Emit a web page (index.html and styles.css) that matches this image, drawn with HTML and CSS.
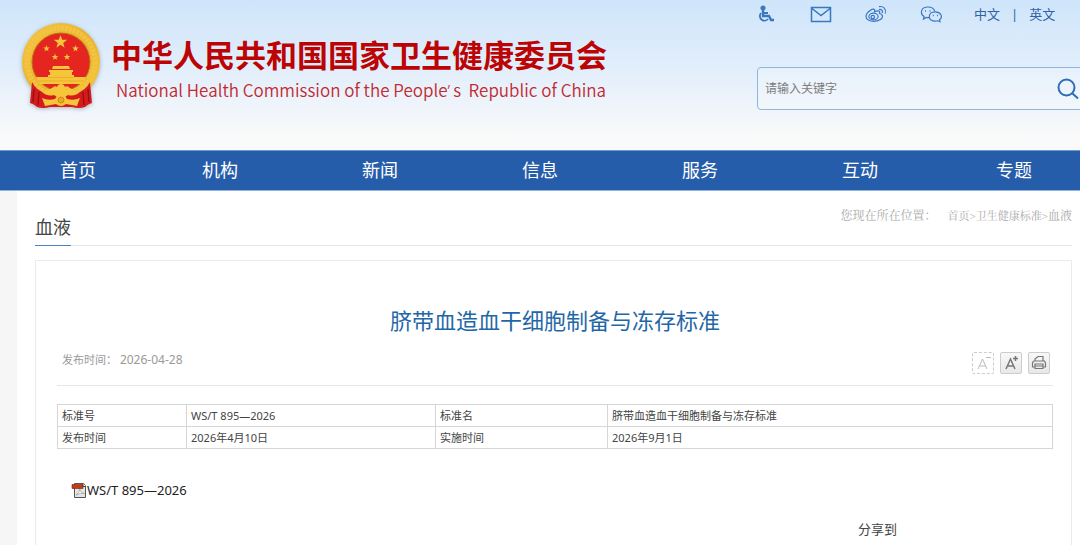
FILE: index.html
```html
<!DOCTYPE html>
<html lang="zh-CN">
<head>
    <meta charset="UTF-8">
    <meta name="viewport" content="width=device-width, initial-scale=1.0">
    <title>脐带血造血干细胞制备与冻存标准</title>
    <link rel="stylesheet" href="styles.css">
</head>
<body>
    <header class="header">
        <a class="brand" href="#">
            <svg class="emblem" viewBox="0 0 80 86" aria-hidden="true">
                <defs>
                    <linearGradient id="gold" x1="0" y1="0" x2="1" y2="1">
                        <stop offset="0" stop-color="#f5c742"/>
                        <stop offset="0.5" stop-color="#eab32c"/>
                        <stop offset="1" stop-color="#f6c63a"/>
                    </linearGradient>
                    <path id="star" d="M0-7 1.7-2.2 6.7-2.2 2.7.9 4.1 5.7 0 2.8-4.1 5.7-2.7.9-6.7-2.2-1.7-2.2z"/>
                </defs>
                <circle cx="40" cy="39" r="39" fill="url(#gold)"/>
                <circle cx="40" cy="39" r="34" fill="none" stroke="#f3c444" stroke-width="5" stroke-dasharray="3 1"/>
                <circle cx="40" cy="39" r="29" fill="#e5251f" stroke="#b97518"/>
                <path d="M11 59 9 80q4 1 7 4 6 2 13 0h22q7 2 13 0 3-3 7-4L69 59q-4 8-13 11H24Q15 67 11 59z" fill="#d51b1c"/>
                <path d="M13 66 12 79M18 69 17 82M67 66l1 13M62 69l1 13" stroke="#9c1013" stroke-width="1.500"/>
                <g fill="#f6c53a">
                    <use href="#star" transform="translate(39.500 19)"/>
                    <use href="#star" transform="translate(25.500 25.500) scale(.5)"/>
                    <use href="#star" transform="translate(54.500 25.500) scale(.5)"/>
                    <use href="#star" transform="translate(34 34) scale(.5)"/>
                    <use href="#star" transform="translate(46 34) scale(.5)"/>
                    <path d="M32 43h16l1 3H31zM28 47h24v2H28zM29 49h22v3H29zM27 52h26v3H27zM15 54h50q-1 4-4 7H19q-3-3-4-7z"/>
                    <path d="M20 68q6 1 11-3 3-3 5-1 1-3 4-3t4 3q2-2 5 1 5 4 11 3-6 6-13 4-3 3-7 3t-7-3q-7 2-13-4z"/>
                    <path d="M21 75q6 3 13 1 2-4 6-4t6 4q7 2 13-1-2 5-3 8l-11-2q-5 4-10 0l-11 2q-1-3-3-8z"/>
                </g>
                <path d="M27 54.500h26M17 58h46" stroke="#e9a52a" stroke-width=".7"/>
                <circle cx="40" cy="77" r="3" fill="#e8a924" stroke="#d8841e"/>
            </svg>
            <span class="brand-text">
                <strong class="brand-cn">中华人民共和国国家卫生健康委员会</strong>
                <span class="brand-en">National Health Commission of the People<span class="quote">’</span>s&nbsp; Republic of China</span>
            </span>
        </a>
        <div class="header-side">
            <div class="tools">
                <a class="tool" href="#" aria-label="无障碍">
                    <svg viewBox="0 0 24 18"><circle cx="9" cy="3" r="2" fill="currentColor"/><path d="M9 5v6h6l2 4h3" stroke-width="2.400"/><path d="M9 8h5M7 8a4.500 4.500 0 1 0 7 6" stroke-width="1.800"/></svg>
                </a>
                <a class="tool" href="#" aria-label="邮箱">
                    <svg viewBox="0 0 24 18"><path d="M2.500 2.500h19v14h-19zM3 3.500l9 7 9-7" stroke-width="1.500"/></svg>
                </a>
                <a class="tool" href="#" aria-label="微博">
                    <svg viewBox="0 0 24 18"><path d="M15.500 8.500c1-3-1.500-3.300-5-1.800 1-3-1.500-3.200-4-1.500-3 2-4.500 4-4.500 6.200 0 3 3.500 5 8 5s8.500-2.500 8.500-5c0-1.500-1-2.500-3-2.900z"/><ellipse cx="9.500" cy="11.500" rx="4.600" ry="3.300"/><circle cx="8.800" cy="12" r="1.700"/><path d="M15 4.500c2.500-.5 4 1.200 3.300 3.500M15 1.700c4.500-1 7.500 2.500 6.300 6.800"/></svg>
                </a>
                <a class="tool" href="#" aria-label="微信">
                    <svg viewBox="0 0 24 18"><path d="M11 12.500c-1 .2-2.500.2-3.600-.1L4.500 14l.6-2.500C.5 8.500 2 2 8.800 2c4 0 6.500 2.200 6.900 4.500"/><path d="M16.300 6.800c-8 0-8 9.400 0 9.400 1 0 1.700-.1 2.500-.4l2.200 1-.5-2c4-3 1-8-4.200-8z"/><path d="M6 6h1M10.500 6h1M13.800 10.500h1M18 10.500h1" stroke-width="1.500"/></svg>
                </a>
                <div class="languages">
                    <a href="#">中文</a>
                    <span>|</span>
                    <a href="#">英文</a>
                </div>
            </div>
            <form class="search">
                <input class="search-input" type="text" placeholder="请输入关键字" aria-label="请输入关键字">
                <button class="search-button" type="button" aria-label="搜索">
                    <svg viewBox="0 0 22 22"><circle cx="9.500" cy="9.500" r="8"/><path d="M15.500 15.500 21 20.500"/></svg>
                </button>
            </form>
        </div>
    </header>

    <nav class="nav">
        <a href="#">首页</a>
        <a href="#">机构</a>
        <a href="#">新闻</a>
        <a href="#">信息</a>
        <a href="#">服务</a>
        <a href="#">互动</a>
        <a href="#">专题</a>
    </nav>

    <main class="content">
        <div class="section-bar">
            <h2>血液</h2>
            <div class="crumbs">
                <span class="crumbs-label">您现在所在位置：</span>
                <span class="crumbs-path"><a href="#">首页</a>&gt;<a href="#">卫生健康标准</a>&gt;</span><a href="#">血液</a>
            </div>
        </div>

        <article class="article">
            <h1>脐带血造血干细胞制备与冻存标准</h1>
            <div class="meta">
                <span class="date">发布时间： <time>2026-04-28</time></span>
                <div class="actions">
                    <button class="action action-off" type="button" aria-label="缩小字体">
                        <svg viewBox="0 0 20 20"><path d="M5 16 9.500 6 14 16M6.500 13h6M13 4.500h5"/></svg>
                    </button>
                    <button class="action" type="button" aria-label="放大字体">
                        <svg viewBox="0 0 20 20"><path d="M5 16 9.500 6 14 16M6.500 13h6" stroke-width="1.500"/><path d="M12 5.500h5M14.500 3v5" stroke-width="1.500"/></svg>
                    </button>
                    <button class="action" type="button" aria-label="打印">
                        <svg viewBox="0 0 20 20"><path d="M6 8V6l3-2.500h5V8M4.500 8h11l1 2v4h-2M5.500 14h-2v-4l1-2M6 11h8v4.500H6zM6 13h8" stroke-width="1.200"/></svg>
                    </button>
                </div>
            </div>

            <table class="info">
                <tr>
                    <td class="col-name">标准号</td>
                    <td class="col-value">WS/T 895—2026</td>
                    <td class="col-label">标准名</td>
                    <td>脐带血造血干细胞制备与冻存标准</td>
                </tr>
                <tr>
                    <td>发布时间</td>
                    <td>2026年4月10日</td>
                    <td>实施时间</td>
                    <td>2026年9月1日</td>
                </tr>
            </table>

            <a class="attachment" href="#">
                <svg viewBox="0 0 16 16" aria-hidden="true">
                    <path d="M3.500 1.500h9l2 2v12h-11z" fill="#e4e4e2" stroke="#555"/>
                    <path d="M5 13c3-2 4-5 3.500-7 1 4 2 5 5 5.500-3-.5-5 0-8.500 1.500z" fill="#fff" stroke="#999" stroke-width=".7"/>
                    <path d="M1 2.500h11v4H1z" fill="#c63a12" stroke="#6f2413" stroke-width=".6"/>
                    <path d="M12 1.500v3h3" fill="#fff" stroke="#444"/>
                </svg>
                <span>WS/T 895—2026</span>
            </a>

            <div class="share">分享到</div>
        </article>
    </main>
</body>
</html>
```

FILE: styles.css
```css
* {
    box-sizing: border-box;
}

body {
    margin: 0;
    overflow: hidden;
    background-color: #f6f6f6;
    color: #444;
    font-family: "Noto Sans", "Noto Sans CJK SC", sans-serif;
    font-size: 12px;
}

a {
    color: inherit;
    text-decoration: none;
}

button {
    padding: 0;
    cursor: pointer;
}

svg {
    display: block;
}

.header {
    display: flex;
    justify-content: space-between;
    height: 150px;
    padding-left: 21px;
    background: linear-gradient(#cfe5fb, #e4effb 50%, #fafafa 93%);
}

.brand {
    display: flex;
    gap: 10px;
    padding-top: 23px;
    white-space: nowrap;
}

.emblem {
    width: 80px;
    height: 86px;
    filter: drop-shadow(0 1px 2px rgba(90, 120, 150, 0.5));
}

.brand-text {
    display: flex;
    flex-direction: column;
    padding-top: 11px;
    color: #bd0404;
    font-family: "Noto Sans CJK SC", sans-serif;
}

.brand-cn {
    font-size: 31px;
    line-height: 40px;
}

.brand-en {
    padding-left: 5px;
    color: #c22a30;
    font-size: 17px;
    font-weight: 350;
    line-height: 31px;
}

.quote {
    margin-right: 3px;
    font-family: "Noto Sans", sans-serif;
}

.header-side {
    width: 323px;
    color: #3a78be;
}

.tools {
    display: flex;
    align-items: center;
    gap: 31px;
    height: 28px;
    margin-left: -3px;
}

.tool svg {
    width: 24px;
    height: 18px;
    fill: none;
    stroke: currentColor;
    stroke-width: 1.2px;
}

.languages {
    display: flex;
    gap: 11px;
    color: #2f62a8;
    font-size: 13px;
    line-height: 18px;
}

.search {
    display: flex;
    align-items: center;
    height: 43px;
    margin: 39px -8px 0 0;
    padding-right: 8px;
    border: 1px solid #8fb6dc;
    border-radius: 4px;
    background-color: rgba(255, 255, 255, 0.2);
}

.search-input {
    flex: 1;
    min-width: 0;
    padding: 0 7px;
    border: 0;
    outline: 0;
    background: none;
    font-family: inherit;
    font-size: 12px;
}

.search-input::placeholder {
    color: #7d7d7d;
}

.search-button {
    border: 0;
    background: none;
}

.search-button svg {
    width: 22px;
    height: 22px;
    fill: none;
    stroke: #2c6cb8;
    stroke-width: 2px;
}

.nav {
    display: grid;
    grid-template-columns: 31fr repeat(5, 40fr) 37fr;
    margin-right: -8px;
    padding-left: 16px;
    border-top: 1px solid #6d98cf;
    border-bottom: 1px solid #8fb3dd;
    background-color: #265dab;
    color: #fff;
    font-size: 18px;
    line-height: 39px;
    text-align: center;
}

.content {
    margin-left: 17px;
    padding: 0 8px 0 18px;
    background-color: #fff;
}

.section-bar {
    display: flex;
    justify-content: space-between;
    border-bottom: 1px solid #e6e6e6;
}

.section-bar h2 {
    margin: 18px 0 -1px;
    border-bottom: 1px solid #4a80c4;
    font-size: 18px;
    font-weight: normal;
    line-height: 36px;
}

.crumbs {
    padding-top: 16px;
    color: #aaa;
    font-family: "Liberation Serif", "Noto Serif CJK SC", "Noto Sans CJK SC", serif;
    line-height: 18px;
}

.crumbs-label {
    margin-right: 8px;
}

.crumbs-path {
    font-size: 11px;
}

.article {
    min-height: 300px;
    margin-top: 14px;
    padding: 37px 18px 0 21px;
    border: 1px solid #ebebeb;
}

.article h1 {
    margin: 0;
    color: #1f67a6;
    font-size: 22px;
    font-weight: normal;
    line-height: 44px;
    text-align: center;
}

.meta {
    display: flex;
    justify-content: space-between;
    height: 44px;
    padding: 10px 3px 0 5px;
    border-bottom: 1px solid #e6e6e6;
    color: #999;
}

.date {
    font-size: 11px;
    line-height: 16px;
}

.date time {
    font-size: 12px;
}

.actions {
    display: flex;
    gap: 6px;
}

.action {
    width: 22px;
    height: 22px;
    border: 1px solid #ccc;
    border-radius: 2px;
    background: linear-gradient(#f8f8f8, #e8e8e8);
    color: #777;
}

.action-off {
    border-style: dashed;
    background: #fff;
    color: #bbb;
}

.action svg {
    width: 20px;
    height: 20px;
    fill: none;
    stroke: currentColor;
}

.info {
    width: 100%;
    margin-top: 18px;
    border-collapse: collapse;
    table-layout: fixed;
    font-size: 11px;
    line-height: 16px;
}

.info td {
    padding: 3px 4px 2px;
    border: 1px solid #d6d6d6;
}

.info .col-name {
    width: 129px;
}

.info .col-value {
    width: 249px;
}

.info .col-label {
    width: 172px;
}

.attachment {
    display: flex;
    align-items: center;
    margin: 32px 0 0 14px;
    color: #222;
    font-size: 13px;
    line-height: 18px;
}

.attachment svg {
    width: 16px;
    height: 16px;
}

.share {
    margin: 20px 156px 0 0;
    font-size: 13px;
    line-height: 20px;
    text-align: right;
}
```
